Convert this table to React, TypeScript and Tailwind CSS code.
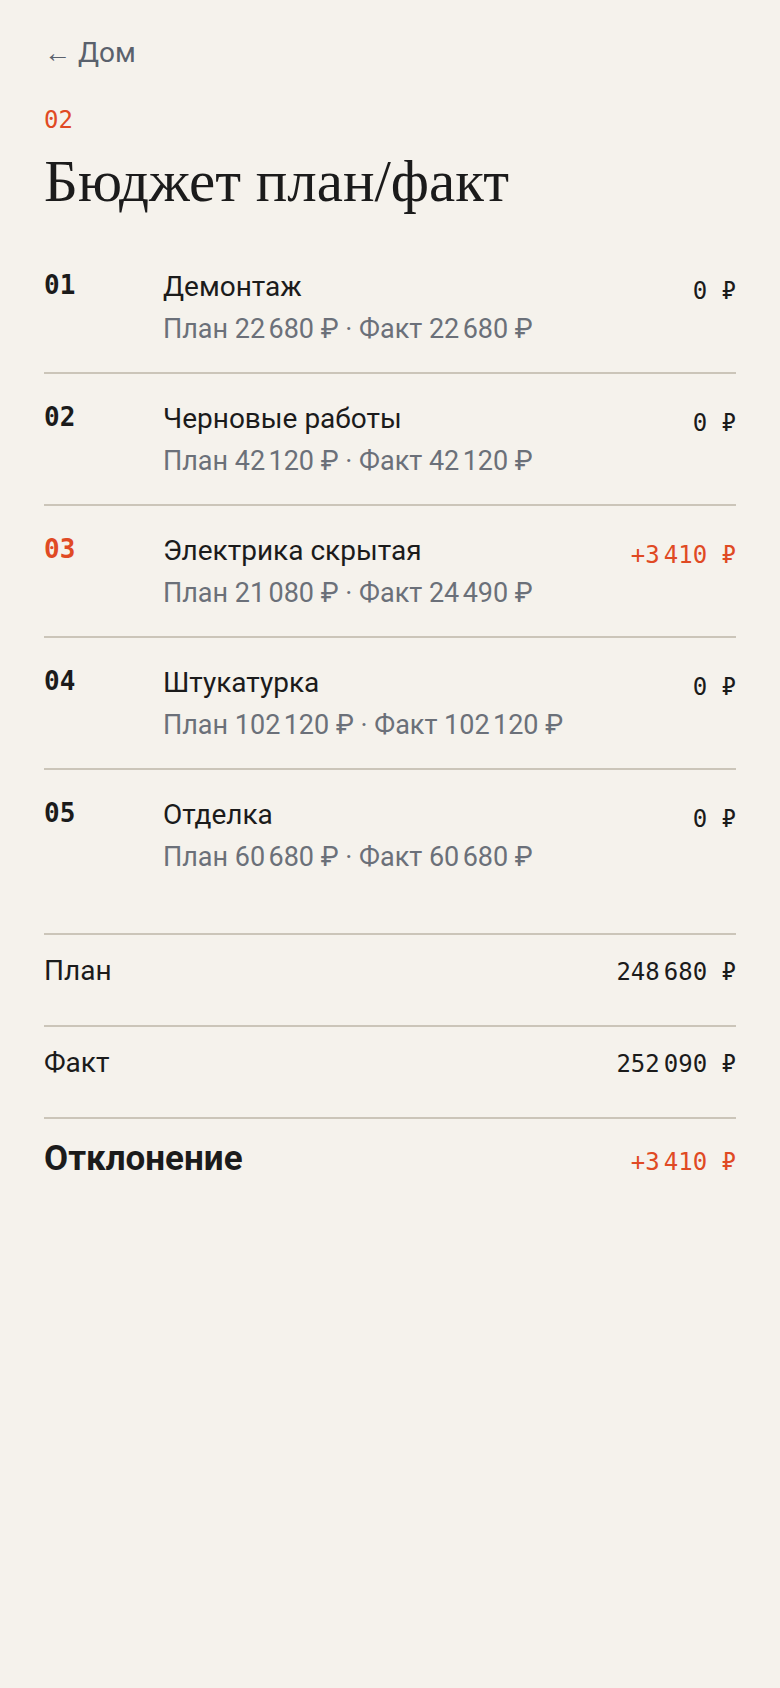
import React from "react";

const SANS = "font-['Roboto','Noto_Sans',sans-serif]";
const MONO = "font-['DejaVu_Sans_Mono','Liberation_Mono',monospace]";

type Item = { n: string; name: string; plan: string; fact: string; diff: string; over?: boolean };

const items: Item[] = [
  { n: "01", name: "Демонтаж", plan: "22\u202F680", fact: "22\u202F680", diff: "0" },
  { n: "02", name: "Черновые работы", plan: "42\u202F120", fact: "42\u202F120", diff: "0" },
  { n: "03", name: "Электрика скрытая", plan: "21\u202F080", fact: "24\u202F490", diff: "+3|410", over: true },
  { n: "04", name: "Штукатурка", plan: "102\u202F120", fact: "102\u202F120", diff: "0" },
  { n: "05", name: "Отделка", plan: "60\u202F680", fact: "60\u202F680", diff: "0" },
];

function Money({ v }: { v: string }) {
  const parts = v.split("|");
  return (
    <>
      {parts.map((p, i) => (
        <React.Fragment key={i}>
          {i > 0 && <span className="inline-block w-[4px]" />}
          {p}
        </React.Fragment>
      ))}
      {" ₽"}
    </>
  );
}

export default function App() {
  return (
    <div className={`min-h-screen bg-[#f5f2ec] px-[44px] pt-[33px] text-[#1b1b1b] ${SANS}`}>
      <div className="text-[28px] leading-[40px] text-[#5a616c]">
        <span className="text-[27px]">←</span> Дом
      </div>
      <div className={`mt-[31px] text-[24px] leading-[32px] text-[#e04a24] ${MONO}`}>02</div>
      <h1 className="mt-[13px] font-['Liberation_Serif',serif] text-[59px] font-normal leading-[64px] text-[#1b1b1b]">
        Бюджет план/факт
      </h1>

      <div className="mt-[29px]">
        {items.map((it, i) => (
          <div
            key={it.n}
            className={`grid grid-cols-[119px_1fr_auto] pt-[25px] pb-[23px] ${
              i < items.length - 1 ? "border-b-2 border-[#cbc5b9]" : ""
            }`}
          >
            <div
              className={`mt-[1px] text-[26px] font-bold leading-[34px] ${MONO} ${
                it.over ? "text-[#e04a24]" : "text-[#1b1b1b]"
              }`}
            >
              {it.n}
            </div>
            <div>
              <div className="text-[28px] leading-[40px] text-[#1b1b1b]">{it.name}</div>
              <div className="mt-[2px] text-[27px] leading-[40px] text-[#6b7079]">
                План {it.plan} ₽ · Факт {it.fact} ₽
              </div>
            </div>
            <div
              className={`mt-[4px] text-[24px] leading-[40px] ${MONO} ${
                it.over ? "text-[#e04a24]" : "text-[#1b1b1b]"
              }`}
            >
              <Money v={it.diff} />
            </div>
          </div>
        ))}
      </div>

      <div className="mt-[33px]">
        <div className="flex items-baseline justify-between border-t-2 border-[#cbc5b9] pt-[16px] pb-[33px]">
          <span className="text-[28px] leading-[40px]">План</span>
          <span className={`text-[24px] leading-[40px] ${MONO}`}>
            <Money v="248|680" />
          </span>
        </div>
        <div className="flex items-baseline justify-between border-t-2 border-[#cbc5b9] pt-[16px] pb-[33px]">
          <span className="text-[28px] leading-[40px]">Факт</span>
          <span className={`text-[24px] leading-[40px] ${MONO}`}>
            <Money v="252|090" />
          </span>
        </div>
        <div className="flex items-baseline justify-between border-t-2 border-[#cbc5b9] pt-[17px] pb-[30px]">
          <span className="text-[35px] font-bold leading-[46px]">Отклонение</span>
          <span className={`text-[24px] leading-[40px] text-[#e04a24] ${MONO}`}>
            <Money v="+3|410" />
          </span>
        </div>
      </div>
    </div>
  );
}
